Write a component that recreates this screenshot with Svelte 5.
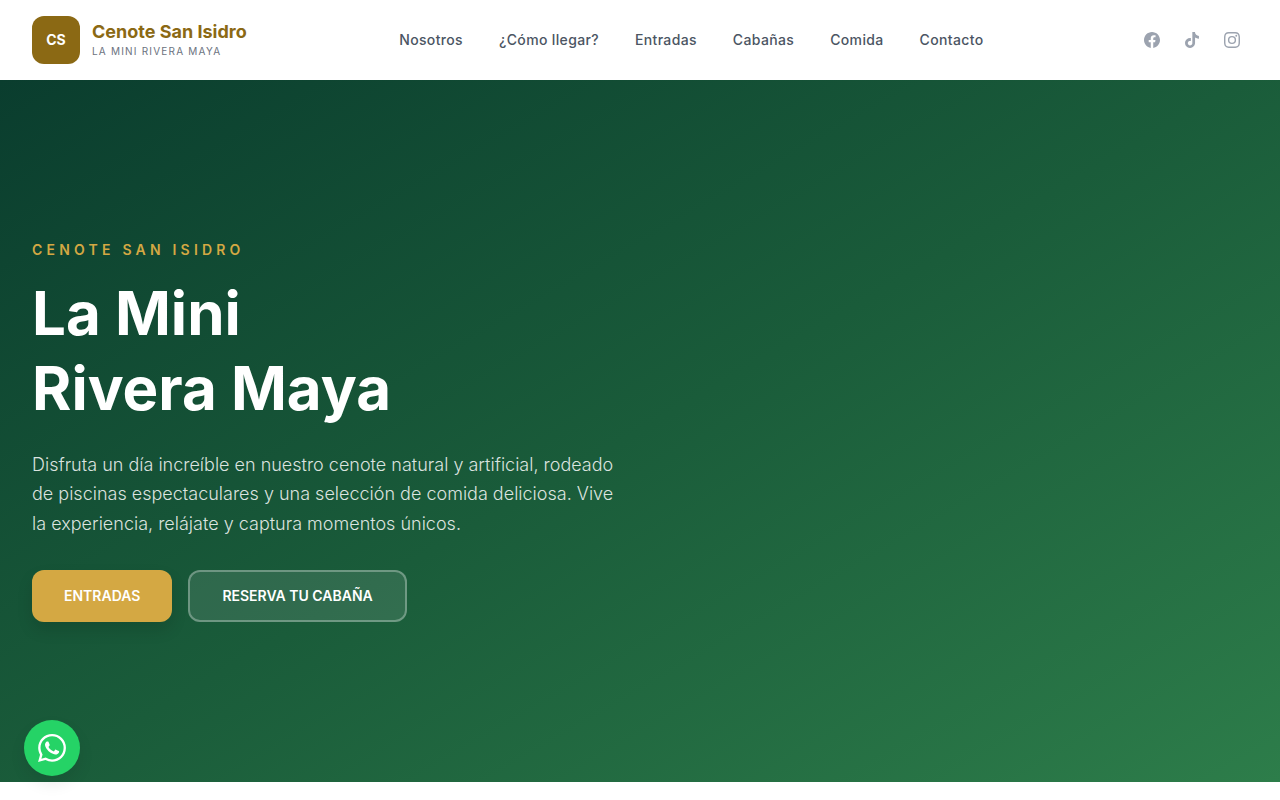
<script lang="ts">
  const links = [
    { label: 'Nosotros', href: '#nosotros' },
    { label: '¿Cómo llegar?', href: '#como-llegar' },
    { label: 'Entradas', href: '#entradas' },
    { label: 'Cabañas', href: '#cabanas' },
    { label: 'Comida', href: '#comida' },
    { label: 'Contacto', href: '#contacto' }
  ];

  const socials = [
    {
      name: 'Facebook',
      path: 'M24 12.073c0-6.627-5.373-12-12-12s-12 5.373-12 12c0 5.99 4.388 10.954 10.125 11.854v-8.385H7.078v-3.47h3.047V9.43c0-3.007 1.792-4.669 4.533-4.669 1.312 0 2.686.235 2.686.235v2.953H15.83c-1.491 0-1.956.925-1.956 1.874v2.25h3.328l-.532 3.47h-2.796v8.385C19.612 23.027 24 18.062 24 12.073z'
    },
    {
      name: 'TikTok',
      path: 'M12.525.02c1.31-.02 2.61-.01 3.91-.02.08 1.53.63 3.09 1.75 4.17 1.12 1.11 2.7 1.62 4.24 1.79v4.03c-1.44-.05-2.89-.35-4.2-.97-.57-.26-1.1-.59-1.62-.93-.01 2.92.01 5.84-.02 8.75-.08 1.4-.54 2.79-1.35 3.94-1.31 1.92-3.58 3.17-5.91 3.21-1.43.08-2.86-.31-4.08-1.03-2.02-1.19-3.44-3.37-3.65-5.71-.02-.5-.03-1-.01-1.49.18-1.9 1.12-3.72 2.58-4.96 1.66-1.44 3.98-2.13 6.15-1.72.02 1.48-.04 2.96-.04 4.44-.99-.32-2.15-.23-3.02.37-.63.41-1.11 1.04-1.36 1.75-.21.51-.15 1.07-.14 1.61.24 1.64 1.82 3.02 3.5 2.87 1.12-.01 2.19-.66 2.77-1.61.19-.33.4-.67.41-1.06.1-1.79.06-3.57.07-5.36.01-4.03-.01-8.05.02-12.07z'
    },
    {
      name: 'Instagram',
      path: 'M12 2.163c3.204 0 3.584.012 4.85.07 3.252.148 4.771 1.691 4.919 4.919.058 1.265.069 1.645.069 4.849 0 3.205-.012 3.584-.069 4.849-.149 3.225-1.664 4.771-4.919 4.919-1.266.058-1.644.07-4.85.07-3.204 0-3.584-.012-4.849-.07-3.26-.149-4.771-1.699-4.919-4.92-.058-1.265-.07-1.644-.07-4.849 0-3.204.013-3.583.07-4.849.149-3.227 1.664-4.771 4.919-4.919 1.266-.057 1.645-.069 4.849-.069zM12 0C8.741 0 8.333.014 7.053.072 2.695.272.273 2.69.073 7.052.014 8.333 0 8.741 0 12c0 3.259.014 3.668.072 4.948.2 4.358 2.618 6.78 6.98 6.98C8.333 23.986 8.741 24 12 24c3.259 0 3.668-.014 4.948-.072 4.354-.2 6.782-2.618 6.979-6.98.059-1.28.073-1.689.073-4.948 0-3.259-.014-3.667-.072-4.947-.196-4.354-2.617-6.78-6.979-6.98C15.668.014 15.259 0 12 0zm0 5.838a6.162 6.162 0 1 0 0 12.324 6.162 6.162 0 0 0 0-12.324zM12 16a4 4 0 1 1 0-8 4 4 0 0 1 0 8zm6.406-11.845a1.44 1.44 0 1 0 0 2.881 1.44 1.44 0 0 0 0-2.881z'
    }
  ];
</script>

<header class="header">
  <a class="brand" href="#inicio">
    <span class="brand-logo">CS</span>
    <span class="brand-text">
      <span class="brand-name">Cenote San Isidro</span>
      <span class="brand-tagline">La Mini Rivera Maya</span>
    </span>
  </a>

  <nav class="nav" aria-label="Principal">
    {#each links as link}
      <a href={link.href}>{link.label}</a>
    {/each}
  </nav>

  <div class="socials">
    {#each socials as social}
      <a href="#{social.name.toLowerCase()}" aria-label={social.name}>
        <svg viewBox="0 0 24 24" fill="currentColor" aria-hidden="true">
          <path d={social.path} />
        </svg>
      </a>
    {/each}
  </div>
</header>

<main>
  <section class="hero" id="inicio">
    <div class="hero-content">
      <p class="eyebrow">Cenote San Isidro</p>
      <h1>La Mini<br />Rivera Maya</h1>
      <p class="lead">
        Disfruta un día increíble en nuestro cenote natural y artificial, rodeado de piscinas
        espectaculares y una selección de comida deliciosa. Vive la experiencia, relájate y captura
        momentos únicos.
      </p>
      <div class="actions">
        <a class="btn btn-primary" href="#entradas">Entradas</a>
        <a class="btn btn-outline" href="#cabanas">Reserva tu cabaña</a>
      </div>
    </div>
  </section>
</main>

<a class="whatsapp" href="#whatsapp" aria-label="WhatsApp">
  <svg viewBox="0 0 24 24" fill="currentColor" aria-hidden="true">
    <path
      d="M17.472 14.382c-.297-.149-1.758-.867-2.03-.967-.273-.099-.471-.148-.67.15-.197.297-.767.966-.94 1.164-.173.199-.347.223-.644.075-.297-.15-1.255-.463-2.39-1.475-.883-.788-1.48-1.761-1.653-2.059-.173-.297-.018-.458.13-.606.134-.133.298-.347.446-.52.149-.174.198-.298.298-.497.099-.198.05-.371-.025-.52-.075-.149-.669-1.612-.916-2.207-.242-.579-.487-.5-.669-.51-.173-.008-.371-.01-.57-.01-.198 0-.52.074-.792.372-.272.297-1.04 1.016-1.04 2.479 0 1.462 1.065 2.875 1.213 3.074.149.198 2.096 3.2 5.077 4.487.709.306 1.262.489 1.694.625.712.227 1.36.195 1.871.118.571-.085 1.758-.719 2.006-1.413.248-.694.248-1.289.173-1.413-.074-.124-.272-.198-.57-.347m-5.421 7.403h-.004a9.87 9.87 0 01-5.031-1.378l-.361-.214-3.741.982.998-3.648-.235-.374a9.86 9.86 0 01-1.51-5.26c.001-5.45 4.436-9.884 9.888-9.884 2.64 0 5.122 1.03 6.988 2.898a9.825 9.825 0 012.893 6.994c-.003 5.45-4.437 9.884-9.885 9.884m8.413-18.297A11.815 11.815 0 0012.05 0C5.495 0 .16 5.335.157 11.892c0 2.096.547 4.142 1.588 5.945L.057 24l6.305-1.654a11.882 11.882 0 005.683 1.448h.005c6.554 0 11.89-5.335 11.893-11.893a11.821 11.821 0 00-3.48-8.413z"
    />
  </svg>
</a>

<style>
  :global(body) {
    margin: 0;
    background: #fff;
    font-family: Inter, 'Liberation Sans', sans-serif;
  }

  a {
    color: inherit;
    text-decoration: none;
  }

  .header {
    display: flex;
    align-items: center;
    justify-content: space-between;
    padding: 16px 32px;
    background: #fff;
  }

  .brand {
    display: flex;
    align-items: center;
    gap: 12px;
  }

  .brand-logo {
    display: flex;
    align-items: center;
    justify-content: center;
    width: 48px;
    height: 48px;
    border-radius: 12px;
    background: #8b6914;
    color: #fff;
    font-size: 14px;
    font-weight: 700;
    line-height: 20px;
  }

  .brand-text {
    display: flex;
    flex-direction: column;
  }

  .brand-name {
    font-size: 18px;
    font-weight: 700;
    line-height: 22px;
    color: #8b6914;
  }

  .brand-tagline {
    font-size: 10px;
    line-height: 16px;
    letter-spacing: 0.12em;
    text-transform: uppercase;
    color: #6b7280;
  }

  .nav {
    display: flex;
    gap: 36px;
    font-size: 14px;
    font-weight: 500;
    line-height: 20px;
    letter-spacing: 0.025em;
    color: #4b5563;
  }

  .socials {
    display: flex;
    gap: 8px;
    color: #9ca3af;
  }

  .socials a {
    display: flex;
    padding: 8px;
  }

  .socials svg {
    width: 16px;
    height: 16px;
  }

  .hero {
    padding: 160px 32px;
    background: linear-gradient(150deg, #0a3d2e 0%, #1a5c3a 50%, #2d7d4a 100%);
  }

  .hero-content {
    max-width: 588px;
  }

  .eyebrow {
    margin: 0 0 16px;
    font-size: 14px;
    font-weight: 600;
    line-height: 20px;
    letter-spacing: 0.3em;
    text-transform: uppercase;
    color: #d4a843;
  }

  h1 {
    margin: 0 0 24px;
    font-size: 60px;
    font-weight: 700;
    line-height: 1.25;
    color: #fff;
  }

  .lead {
    margin: 0 0 32px;
    font-size: 18px;
    font-weight: 300;
    line-height: 1.625;
    color: rgba(255, 255, 255, 0.85);
  }

  .actions {
    display: flex;
    flex-wrap: wrap;
    gap: 16px;
  }

  .btn {
    padding: 16px 32px;
    border-radius: 12px;
    color: #fff;
    font-size: 14px;
    font-weight: 600;
    line-height: 20px;
    text-transform: uppercase;
  }

  .btn-primary {
    background: #d4a843;
    box-shadow: 0 8px 16px rgba(0, 0, 0, 0.12);
  }

  .btn-outline {
    padding: 14px 32px;
    border: 2px solid rgba(255, 255, 255, 0.3);
    background: rgba(255, 255, 255, 0.1);
  }

  .whatsapp {
    position: fixed;
    bottom: 24px;
    left: 24px;
    display: flex;
    align-items: center;
    justify-content: center;
    width: 56px;
    height: 56px;
    border-radius: 50%;
    background: #25d366;
    color: #fff;
    box-shadow: 0 8px 16px rgba(0, 0, 0, 0.08);
  }

  .whatsapp svg {
    width: 28px;
    height: 28px;
  }
</style>
